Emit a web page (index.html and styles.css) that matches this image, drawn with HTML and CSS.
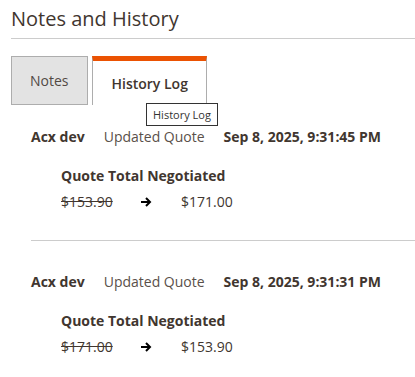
FILE: index.html
```html
<!DOCTYPE html>
<html lang="en">
<head>
    <meta charset="UTF-8">
    <meta name="viewport" content="width=device-width, initial-scale=1.0">
    <title>Notes and History</title>
    <link rel="stylesheet" href="styles.css">
</head>
<body>
    <div class="section">
        <h2 class="section-title">Notes and History</h2>

        <!-- Tabs -->
        <div class="tabs">
            <div class="tab">Notes</div>
            <div class="tab active">History Log</div>
            <div class="tooltip">History Log</div>
        </div>

        <!-- History entries -->
        <div class="history">
            <div class="entry">
                <div class="entry-head">
                    <span class="author">Acx dev</span>
                    <span class="action">Updated Quote</span>
                    <span class="date">Sep 8, 2025, 9:31:45 PM</span>
                </div>
                <div class="change">
                    <div class="change-title">Quote Total Negotiated</div>
                    <div class="change-values">
                        <span class="old">$153.90</span>
                        <svg class="arrow" width="11" height="10" viewBox="0 0 11 10"><path d="M0 5h9M5 1l4 4-4 4" fill="none" stroke="#000" stroke-width="2"/></svg>
                        <span class="new">$171.00</span>
                    </div>
                </div>
            </div>
            <div class="entry">
                <div class="entry-head">
                    <span class="author">Acx dev</span>
                    <span class="action">Updated Quote</span>
                    <span class="date">Sep 8, 2025, 9:31:31 PM</span>
                </div>
                <div class="change">
                    <div class="change-title">Quote Total Negotiated</div>
                    <div class="change-values">
                        <span class="old">$171.00</span>
                        <svg class="arrow" width="11" height="10" viewBox="0 0 11 10"><path d="M0 5h9M5 1l4 4-4 4" fill="none" stroke="#000" stroke-width="2"/></svg>
                        <span class="new">$153.90</span>
                    </div>
                </div>
            </div>
        </div>
    </div>
</body>
</html>
```

FILE: styles.css
```css
body {
    margin: 0;
    font-family: "Open Sans", Arial, sans-serif;
    color: #41362f;
    background: #fff;
}
.section {
    padding: 0 0 0 11px;
}
.section-title {
    margin: 0;
    padding: 6px 0 6px;
    font-size: 20px;
    font-weight: 400;
    line-height: 26px;
    border-bottom: 1px solid #cccccc;
}
.tabs {
    position: relative;
    display: flex;
    gap: 4px;
    margin-top: 17px;
}
.tab {
    box-sizing: border-box;
    height: 49px;
    padding: 0 18px;
    display: flex;
    align-items: center;
    font-size: 14px;
    color: #514943;
    background: #e3e3e3;
    border: 1px solid #adadad;
}
.tab.active {
    padding: 0 18px 0 19px;
    font-weight: 600;
    color: #41362f;
    background: #fff;
    border-top: 5px solid #eb5202;
    border-bottom: none;
}
.tooltip {
    position: absolute;
    left: 135px;
    top: 47px;
    padding: 3px 6px;
    font-size: 11px;
    color: #333;
    background: #fff;
    border: 1px solid #333;
    z-index: 2;
}
.history {
    padding: 22px 0 0 20px;
}
.entry {
    padding-bottom: 28px;
}
.entry + .entry {
    border-top: 1px solid #cccccc;
    padding-top: 31px;
}
.entry-head {
    display: flex;
    gap: 19px;
    font-size: 14px;
    line-height: 20px;
}
.author, .date {
    font-weight: 700;
}
.action {
    color: #5a504a;
}
.change {
    padding: 19px 0 0 30px;
    font-size: 14px;
}
.change-title {
    font-weight: 700;
    line-height: 20px;
}
.change-values {
    display: flex;
    align-items: center;
    margin-top: 6px;
    line-height: 20px;
}
.old {
    width: 80px;
    text-decoration: line-through;
}
.arrow {
    margin-right: 29px;
}
```
